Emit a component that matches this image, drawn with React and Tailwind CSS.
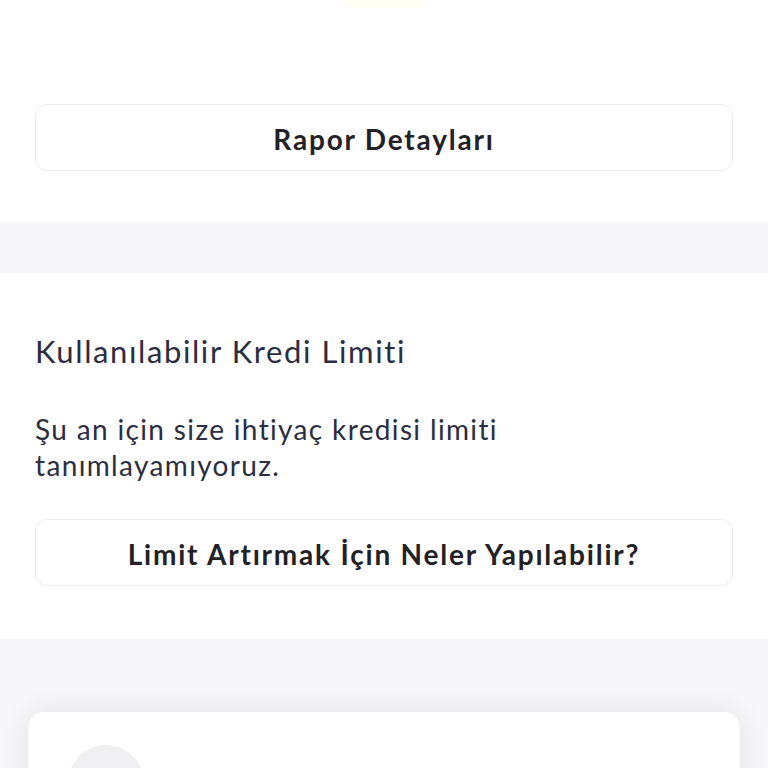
import React from 'react'

const OutlineButton = ({ children }) => (
  <button
    type="button"
    className="w-full h-[67px] rounded-[12px] border border-[#ececef] bg-white text-[28px] font-bold text-[#222226] tracking-[1.8px] pt-[3px]"
  >
    {children}
  </button>
)

export default function App() {
  return (
    <div className="w-[768px] h-[768px] overflow-hidden bg-[#f7f7f9] font-['Lato',sans-serif]">
      <section className="bg-white h-[222px] flex flex-col items-center">
        <div className="w-[80px] h-[8px] bg-[#fffff4] rounded-b-[6px]" />
        <div className="w-full px-[35px] pt-[96px]">
          <OutlineButton>Rapor Detayları</OutlineButton>
        </div>
      </section>

      <div className="h-[51px]" />

      <section className="bg-white h-[366px] px-[35px] pt-[58px]">
        <h2 className="text-[31px] leading-[40px] tracking-[1.6px] text-[#2b2d40]">Kullanılabilir Kredi Limiti</h2>
        <p className="mt-[40px] text-[28px] leading-[36px] tracking-[1.35px] text-[#2b2d40] max-w-[520px]">
          Şu an için size ihtiyaç kredisi limiti tanımlayamıyoruz.
        </p>
        <div className="mt-[36px]">
          <OutlineButton>Limit Artırmak İçin Neler Yapılabilir?</OutlineButton>
        </div>
      </section>

      <div className="px-[28px] pt-[73px]">
        <div className="h-[200px] bg-white rounded-[16px] shadow-[0_0_28px_rgba(0,0,0,0.09)] px-[40px] pt-[33px]">
          <div className="w-[76px] h-[76px] rounded-full bg-[#f0f0f3]" />
        </div>
      </div>
    </div>
  )
}
